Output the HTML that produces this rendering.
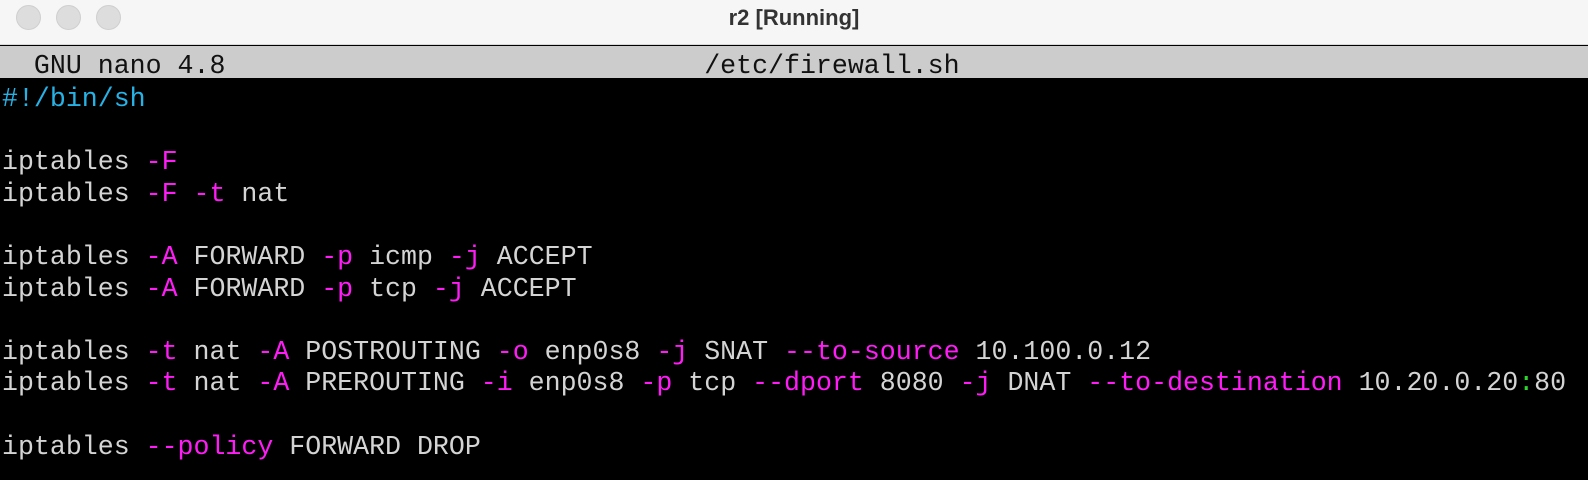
<!DOCTYPE html>
<html><head><meta charset="utf-8"><style>
html,body{margin:0;padding:0;width:1588px;height:480px;overflow:hidden;background:#000;}
#tb{position:absolute;left:0;top:0;width:1588px;height:44px;background:#f6f6f6;border-bottom:1px solid #d8d8d8;}
.c{position:absolute;top:5px;width:23px;height:23px;border-radius:50%;background:#dddddd;border:1px solid #cfcfcf;}
#title{position:absolute;left:0;width:1588px;top:5px;text-align:center;font:bold 22px "Liberation Sans",sans-serif;color:#333;}
#hdr{position:absolute;left:0;top:46px;width:1588px;height:32px;background:#cccccc;}
pre{margin:0;position:absolute;left:2px;font-family:"Liberation Mono",monospace;font-size:26.6px;line-height:31.6px;color:#d4d4d4;white-space:pre;}
#h{top:51px;color:#111;}
#t{top:84px;}
.m{color:#ff1cf6}.b{color:#27b2e6}.g{color:#2ed62e}
</style></head><body>
<div id="tb"><div class="c" style="left:16px"></div><div class="c" style="left:56px"></div><div class="c" style="left:96px"></div><div id="title">r2 [Running]</div></div>
<div id="hdr"></div>
<pre id="h">  GNU nano 4.8                              /etc/firewall.sh</pre>
<pre id="t"><span class="b">#!/bin/sh</span>

iptables <span class="m">-F</span>
iptables <span class="m">-F</span> <span class="m">-t</span> nat

iptables <span class="m">-A</span> FORWARD <span class="m">-p</span> icmp <span class="m">-j</span> ACCEPT
iptables <span class="m">-A</span> FORWARD <span class="m">-p</span> tcp <span class="m">-j</span> ACCEPT

iptables <span class="m">-t</span> nat <span class="m">-A</span> POSTROUTING <span class="m">-o</span> enp0s8 <span class="m">-j</span> SNAT <span class="m">--to-source</span> 10.100.0.12
iptables <span class="m">-t</span> nat <span class="m">-A</span> PREROUTING <span class="m">-i</span> enp0s8 <span class="m">-p</span> tcp <span class="m">--dport</span> 8080 <span class="m">-j</span> DNAT <span class="m">--to-destination</span> 10.20.0.20<span class="g">:</span>80

iptables <span class="m">--policy</span> FORWARD DROP</pre>
</body></html>
